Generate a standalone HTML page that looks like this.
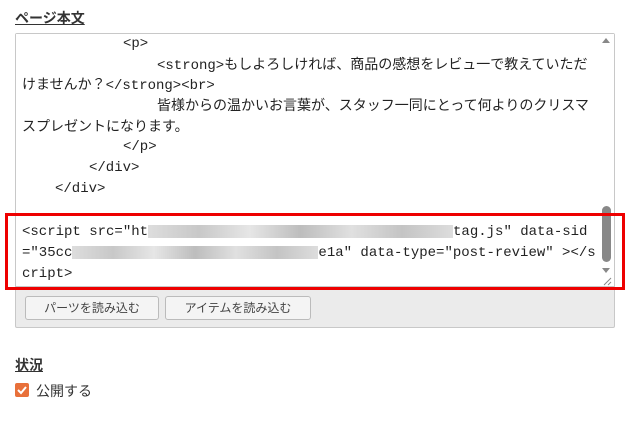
<!DOCTYPE html>
<html><head><meta charset="utf-8"><style>
body{margin:0;width:629px;height:431px;background:#fff;font-family:"Liberation Sans","Noto Sans CJK JP",sans-serif;color:#333;position:relative;overflow:hidden}
.h{position:absolute;left:15px;font-size:14px;font-weight:bold;text-decoration:underline;color:#333}
.panel{position:absolute;left:15px;top:33px;width:598px;height:293px;background:#ebebeb;border:1px solid #c8c8c8;border-radius:2px}
.ta{position:absolute;left:16px;top:34px;width:598px;height:252px;background:#fff;border-bottom:1px solid #c8c8c8}
.l{position:absolute;font-family:"Liberation Mono","Noto Sans CJK JP",monospace;font-size:14px;color:#222;white-space:pre;line-height:16px}
.j{font-family:"Noto Sans CJK JP",sans-serif;font-size:14px}
.sb{position:absolute;left:602px;top:206px;width:9px;height:56px;background:#888;border-radius:5px}
.red{position:absolute;left:5px;top:213px;width:614px;height:71px;border:3px solid #e00}
.btn{position:absolute;top:296px;height:22px;border:1px solid #bbb;border-radius:3px;background:#f4f4f4;font-size:12px;color:#444;text-align:center;line-height:22px}
.blur{display:inline-block;height:13px;vertical-align:middle;background:linear-gradient(90deg,#ddd,#c8c8c8,#e6e6e6,#bdbdbd,#e0e0e0,#c4c4c4,#ddd)}
</style></head><body>
<div class="h" style="top:8px">ページ本文</div>
<div class="panel"></div>
<div class="ta"></div>
<div class="l" style="left:123px;top:36px">&lt;p&gt;</div>
<div class="l" style="left:157px;top:56px">&lt;strong&gt;<span class="j">もしよろしければ、商品の感想をレビュ一で教えていただ</span></div>
<div class="l" style="left:22px;top:76px"><span class="j">けませんか？</span>&lt;/strong&gt;&lt;br&gt;</div>
<div class="l" style="left:157px;top:97px"><span class="j">皆様からの温かいお言葉が、スタッフ一同にとって何よりのクリスマ</span></div>
<div class="l" style="left:22px;top:118px"><span class="j">スプレゼントになります。</span></div>
<div class="l" style="left:123px;top:139px">&lt;/p&gt;</div>
<div class="l" style="left:89px;top:160px">&lt;/div&gt;</div>
<div class="l" style="left:55px;top:181px">&lt;/div&gt;</div>
<div class="l" style="left:22px;top:224px">&lt;script src="ht<span class="blur" style="width:305px"></span>tag.js" data-sid</div>
<div class="l" style="left:22px;top:245px">="35cc<span class="blur" style="width:246px"></span>e1a" data-type="post-review" &gt;&lt;/s</div>
<div class="l" style="left:22px;top:266px">cript&gt;</div>
<div style="position:absolute;left:602px;top:38px;width:0;height:0;border:4px solid transparent;border-bottom:5px solid #888;border-top:0"></div>
<div style="position:absolute;left:602px;top:268px;width:0;height:0;border:4px solid transparent;border-top:5px solid #888;border-bottom:0"></div>
<div class="sb"></div>
<svg style="position:absolute;left:603px;top:277px" width="9" height="9"><path d="M1 8L8 1M5 8L8 5" stroke="#888" stroke-width="1"/></svg>
<div class="red"></div>
<div class="btn" style="left:25px;width:132px">パーツを読み込む</div>
<div class="btn" style="left:165px;width:144px">アイテムを読み込む</div>
<div class="h" style="top:355px">状況</div>
<div style="position:absolute;left:15px;top:383px;width:14px;height:14px;background:#e8703a;border-radius:2px"><svg width="14" height="14"><path d="M3 7l3 3 5-6" stroke="#fff" stroke-width="2" fill="none"/></svg></div>
<div style="position:absolute;left:36px;top:381px;font-size:14px;color:#333">公開する</div>
</body></html>
